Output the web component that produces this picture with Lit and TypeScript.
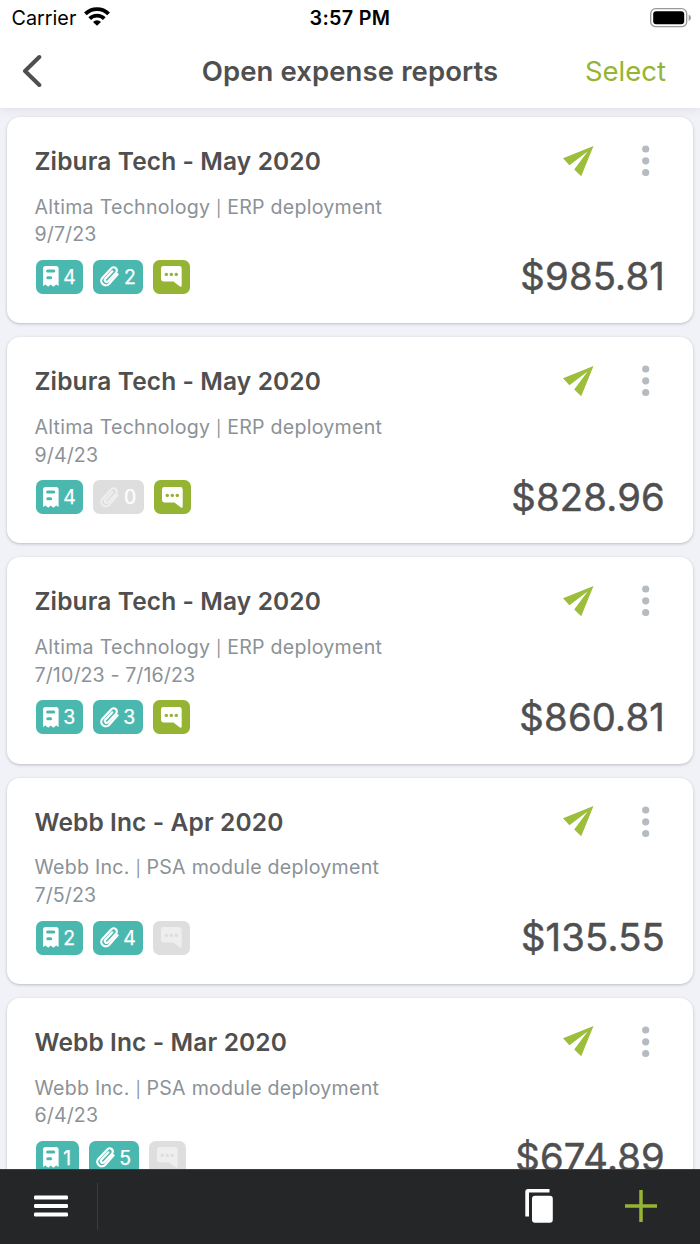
import { LitElement, html, css } from "lit";
import { customElement, property } from "lit/decorators.js";
import { classMap } from "lit/directives/class-map.js";

interface Report {
  title: string;
  client: string;
  project: string;
  dates: string;
  receipts: number;
  attachments: number;
  commented: boolean;
  total: string;
}

const REPORTS: Report[] = [
  { title: "Zibura Tech - May 2020", client: "Altima Technology", project: "ERP deployment", dates: "9/7/23", receipts: 4, attachments: 2, commented: true, total: "$985.81" },
  { title: "Zibura Tech - May 2020", client: "Altima Technology", project: "ERP deployment", dates: "9/4/23", receipts: 4, attachments: 0, commented: true, total: "$828.96" },
  { title: "Zibura Tech - May 2020", client: "Altima Technology", project: "ERP deployment", dates: "7/10/23 - 7/16/23", receipts: 3, attachments: 3, commented: true, total: "$860.81" },
  { title: "Webb Inc - Apr 2020", client: "Webb Inc.", project: "PSA module deployment", dates: "7/5/23", receipts: 2, attachments: 4, commented: false, total: "$135.55" },
  { title: "Webb Inc - Mar 2020", client: "Webb Inc.", project: "PSA module deployment", dates: "6/4/23", receipts: 1, attachments: 5, commented: false, total: "$674.89" },
];

const receiptIcon = html`<svg width="16" height="21" viewBox="0 0 16 21">
  <path fill="currentColor" fill-rule="evenodd" d="M2.6 0H13a2.6 2.6 0 0 1 2.6 2.6V20L13.2 18.4 10.4 20.8 7.8 18.4 5.2 20.8 2.4 18.4 0 20V2.6A2.6 2.6 0 0 1 2.6 0ZM4.6 3.6a1.5 1.5 0 0 0 0 3H10.8a1.5 1.5 0 0 0 0-3ZM4.8 10.2a1.5 1.5 0 0 0 0 3H7.6a1.5 1.5 0 0 0 0-3Z"/></svg>`;

const clipIcon = html`<svg width="19" height="21" viewBox="0 0 19 21">
  <path fill="none" stroke="currentColor" stroke-width="2.2" stroke-linecap="round" stroke-linejoin="round"
    d="M17.6 8.2 9 17.9A4.5 4.5 0 0 1 2.3 11.9L11.2 2.4A3.2 3.2 0 0 1 16 6.7L7.9 15.4A1.9 1.9 0 0 1 5.1 12.9L12.4 5.3"/></svg>`;

const commentIcon = html`<svg width="21" height="21" viewBox="0 0 21 21">
  <path fill="currentColor" fill-rule="evenodd" d="M2.4 0H18.3A2.4 2.4 0 0 1 20.7 2.4V19.6Q20.7 21.4 19 20.4L12.4 15.4H2.4A2.4 2.4 0 0 1 0 13V2.4A2.4 2.4 0 0 1 2.4 0ZM5.3 6.7a1.7 1.7 0 1 0 .01 0ZM10.3 6.7a1.7 1.7 0 1 0 .01 0ZM15.3 6.7a1.7 1.7 0 1 0 .01 0Z"/></svg>`;

@customElement("report-card")
class ReportCard extends LitElement {
  @property({ attribute: false }) report!: Report;

  static styles = css`
    :host {
      display: block;
      flex: none;
      height: 206.2px;
      box-sizing: border-box;
      padding: 28px 28px 28px 27.5px;
      border-radius: 13px;
      background: #fff;
      box-shadow: 0 1px 3px rgba(60, 65, 80, 0.3);
    }
    svg { display: block; flex: none; }
    .head { display: flex; align-items: center; height: 32px; }
    .title {
      flex: 1;
      font-size: 24.5px;
      font-weight: 600;
      line-height: 32px;
      letter-spacing: 0.12px;
      color: #4f4f4f;
    }
    .send { margin-right: 48px; }
    .dots { margin-right: 15px; }
    .meta {
      margin-top: 16.8px;
      font-size: 19.6px;
      line-height: 27.6px;
      letter-spacing: 0.25px;
      color: #8b9297;
      white-space: nowrap;
    }
    .pipe { font-size: 16px; line-height: 1; letter-spacing: 0; }
    .dates { letter-spacing: 0.1px; }
    .foot {
      display: flex;
      align-items: center;
      justify-content: space-between;
      margin-top: 11px;
      height: 34px;
    }
    .badges { display: flex; gap: 10px; margin-left: 1px; }
    .badge {
      display: flex;
      align-items: center;
      box-sizing: border-box;
      height: 34px;
      padding: 0 7.5px 0 7px;
      gap: 4.7px;
      border-radius: 6.5px;
      background: #4bb8b0;
      color: #fff;
      font-size: 19.4px;
      -webkit-text-stroke: 0.25px currentColor;
    }
    .badge.note { background: #96b434; padding: 0 8px; }
    .badge.off { background: #dedede; }
    .badge.off svg { color: #eee; }
    .total {
      margin-top: -1px;
      font-size: 38.2px;
      line-height: 34px;
      letter-spacing: 0.2px;
      color: #4f4f4f;
      -webkit-text-stroke: 0.5px currentColor;
    }
  `;

  render() {
    const r = this.report;
    return html`
      <div class="head">
        <div class="title">${r.title}</div>
        <svg class="send" width="31" height="31" viewBox="0 0 31 31">
          <path fill="#9cbe3a" d="M0 12.2 30.5 0 18.2 30.3 11.2 23.6 24.6 5.6 6.4 19.2Z"/>
        </svg>
        <svg class="dots" width="8" height="32" viewBox="0 0 8 32">
          <g fill="#b5bbc0"><circle cx="3.7" cy="4" r="3.6"/><circle cx="3.7" cy="15.8" r="3.6"/><circle cx="3.7" cy="27.5" r="3.6"/></g>
        </svg>
      </div>
      <div class="meta">${r.client} <span class="pipe">|</span> ${r.project}<br /><span class="dates">${r.dates}</span></div>
      <div class="foot">
        <div class="badges">
          <div class="badge">${receiptIcon}<span>${r.receipts}</span></div>
          <div class=${classMap({ badge: true, off: r.attachments === 0 })}>${clipIcon}<span>${r.attachments}</span></div>
          <div class=${classMap({ badge: true, note: true, off: !r.commented })}>${commentIcon}</div>
        </div>
        <div class="total">${r.total}</div>
      </div>
    `;
  }
}

@customElement("app-root")
class AppRoot extends LitElement {
  static styles = css`
    :host {
      display: flex;
      flex-direction: column;
      height: 1244px;
      overflow: hidden;
      background: #f1f2f7;
      font-family: Inter, "Liberation Sans", sans-serif;
    }
    svg { display: block; flex: none; }
    .top { flex: none; height: 108px; background: #fff; box-shadow: 0 0 10px rgba(60, 65, 80, 0.13); }
    .status {
      display: grid;
      grid-template-columns: 1fr auto 1fr;
      align-items: center;
      height: 36px;
      padding: 0 8px 0 8px;
      font-size: 19.8px;
      color: #000;
    }
    .carrier { display: flex; align-items: center; gap: 8px; padding-left: 3.5px; }
    .wifi { margin-top: -3px; }
    .time { font-weight: 600; letter-spacing: 0.3px; }
    .battery { justify-self: end; margin-right: 0.5px; }
    .nav {
      display: grid;
      grid-template-columns: 1fr auto 1fr;
      align-items: center;
      height: 70px;
      padding: 0 34px 0 34px;
      color: #4f4f4f;
    }
    .back { margin-left: -12px; }
    .heading { font-size: 27.5px; font-weight: 600; letter-spacing: 0.1px; }
    .select { justify-self: end; font-size: 27.5px; color: #96b434; }
    .list {
      flex: 1;
      min-height: 0;
      overflow: hidden;
      display: flex;
      flex-direction: column;
      gap: 14px;
      padding: 9px 7px 0;
    }
    .bar {
      flex: none;
      display: flex;
      align-items: center;
      box-sizing: border-box;
      height: 75px;
      padding: 0 43.5px 1.4px 34px;
      background: #252628;
      border-top: 1px solid #3c3d3f;
    }
    .rule { width: 1px; height: 47px; margin: 0 auto 0 29px; background: #3c3d3f; }
    .copy { margin-right: 71.3px; }
  `;

  render() {
    return html`
      <header class="top">
        <div class="status">
          <div class="carrier">
            <span>Carrier</span>
            <svg class="wifi" width="26" height="19" viewBox="0 0 26 19">
              <g fill="none" stroke="#000" stroke-width="3.8">
                <path d="M1.4 6.9A16.4 16.4 0 0 1 24.6 6.9"/>
                <path d="M5.7 11.6A10.4 10.4 0 0 1 20.3 11.6"/>
              </g>
              <path d="M9 14.9A5.6 5.6 0 0 1 17 14.9L13 18.8Z"/>
            </svg>
          </div>
          <div class="time">3:57 PM</div>
          <svg class="battery" width="42" height="20" viewBox="0 0 42 20">
            <rect x=".7" y=".7" width="36" height="18" rx="5" fill="none" stroke="#999" stroke-width="1.3"/>
            <rect x="3.2" y="3.2" width="31" height="13" rx="3"/>
            <path fill="#999" d="M38.7 6.5Q41 8 41 9.7T38.7 13Z"/>
          </svg>
        </div>
        <div class="nav">
          <svg class="back" width="20" height="34" viewBox="0 0 20 34">
            <path fill="none" stroke="#4f4f4f" stroke-width="4" stroke-linecap="round" stroke-linejoin="round" d="M17.3 3 3 17 17.3 31"/>
          </svg>
          <div class="heading">Open expense reports</div>
          <div class="select">Select</div>
        </div>
      </header>
      <main class="list">
        ${REPORTS.map((r) => html`<report-card .report=${r}></report-card>`)}
      </main>
      <footer class="bar">
        <svg width="34" height="22" viewBox="0 0 34 22">
          <g fill="#fff"><rect width="34" height="4" rx="1.2" y=".5"/><rect width="34" height="4" rx="1.2" y="9"/><rect width="34" height="4" rx="1.2" y="17.5"/></g>
        </svg>
        <div class="rule"></div>
        <svg class="copy" width="28" height="34" viewBox="0 0 28 34">
          <path fill="#fff" d="M2.6 0H24.5V3.6H4V27.5H.3V2.6A2.6 2.6 0 0 1 2.6 0Z"/>
          <rect x="7" y="6.8" width="20.8" height="27" rx="3" fill="#fff"/>
        </svg>
        <svg width="32" height="32" viewBox="0 0 32 32">
          <path stroke="#96b434" stroke-width="3.5" d="M16 0V32M0 16H32"/>
        </svg>
      </footer>
    `;
  }
}
